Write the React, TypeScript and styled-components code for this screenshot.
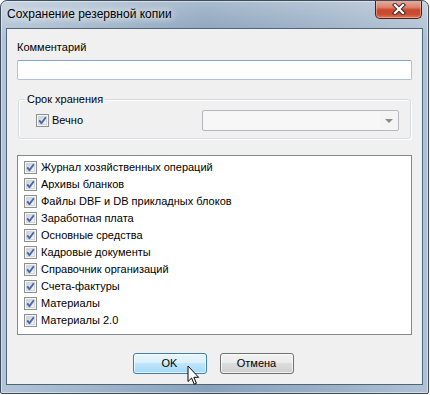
import React from "react";
import styled, { createGlobalStyle } from "styled-components";

const Global = createGlobalStyle`
  html, body { margin: 0; padding: 0; background: #ffffff; }
  body { font-family: "Segoe UI", "Liberation Sans", Arial, sans-serif; font-size: 11px; color: #000; }
`;

const Window = styled.div`
  position: relative;
  width: 429px;
  height: 394px;
  box-sizing: border-box;
  border: 1px solid #3e4c5c;
  border-radius: 7px 7px 2px 2px;
  box-shadow: inset 0 0 0 1px rgba(255, 255, 255, 0.45);
  background:
    linear-gradient(to bottom, rgba(255, 255, 255, 0.28), rgba(255, 255, 255, 0) 36px),
    linear-gradient(to right, #b2c4d6 0%, #a0b5ca 22%, #88a1bb 48%, #9cb1c6 78%, #b0c2d3 100%);
  display: flex;
  flex-direction: column;
  overflow: hidden;
`;

const TitleBar = styled.div`
  height: 27px;
  display: flex;
  align-items: flex-start;
  justify-content: space-between;
  padding-left: 6px;
`;

const Title = styled.div`
  margin-top: 6px;
  font-size: 12px;
  line-height: 15px;
  color: #000;
  text-shadow: 0 0 6px rgba(255, 255, 255, 0.95), 0 0 10px rgba(255, 255, 255, 0.8);
`;

const CloseButton = styled.div`
  width: 47px;
  height: 19px;
  margin-top: -1px;
  margin-right: 6px;
  box-sizing: border-box;
  border: 1px solid #4a2018;
  border-top: none;
  border-radius: 0 0 5px 5px;
  background: linear-gradient(
    to bottom,
    #eab0a3 0%,
    #dc836f 40%,
    #c9482f 55%,
    #cc4c31 80%,
    #dc7a60 100%
  );
  box-shadow: inset 0 0 0 1px rgba(255, 200, 190, 0.5);
  display: flex;
  align-items: center;
  justify-content: center;
`;

const Client = styled.div`
  flex: 1;
  margin: 0 5px 8px 5px;
  border: 1px solid #50657a;
  background: #f0f0f0;
  display: flex;
  flex-direction: column;
  padding: 0 10px;
`;

const Label = styled.div`
  margin-top: 11px;
  line-height: 15px;
`;

const TextInput = styled.div`
  margin-top: 5px;
  height: 20px;
  box-sizing: border-box;
  border: 1px solid #a9c3df;
  border-top-color: #7fa3c9;
  border-radius: 2px;
  background: #fff;
`;

const Group = styled.fieldset`
  margin: 12px 1px 0 1px;
  padding: 0;
  border: 1px solid #d5dde3;
  border-radius: 3px;
  box-shadow: inset 1px 1px 0 #fff, 1px 1px 0 #fff;
  min-width: 0;
`;

const Legend = styled.legend`
  margin-left: 6px;
  padding: 0 2px;
  line-height: 15px;
`;

const GroupRow = styled.div`
  display: flex;
  align-items: center;
  justify-content: space-between;
  padding: 3px 11px 7px 17px;
`;

const CheckRow = styled.div<{ $gap: number }>`
  display: flex;
  align-items: center;
  gap: ${(p) => p.$gap}px;
  line-height: 17px;
  height: 17px;
  white-space: nowrap;
`;

const Combo = styled.div`
  width: 197px;
  height: 21px;
  box-sizing: border-box;
  border: 1px solid #b5b9bd;
  border-radius: 2px;
  background: #f4f4f4;
  display: flex;
  align-items: stretch;
  padding: 1px;
`;

const ComboField = styled.div`
  flex: 1;
  background: #f7f7f7;
`;

const ComboArrow = styled.div`
  width: 17px;
  display: flex;
  align-items: center;
  justify-content: center;
`;

const List = styled.div`
  margin-top: 16px;
  height: 180px;
  box-sizing: border-box;
  border: 1px solid #828790;
  background: #fff;
  padding: 3px 6px;
  display: flex;
  flex-direction: column;
`;

const ButtonRow = styled.div`
  display: flex;
  justify-content: center;
  gap: 13px;
  margin-top: 18px;
  padding-right: 3px;
`;

const Button = styled.div<{ $hover?: boolean }>`
  width: 74px;
  height: 21px;
  box-sizing: border-box;
  border: 1px solid ${(p) => (p.$hover ? "#3c7fb1" : "#707070")};
  border-radius: 3px;
  background: ${(p) =>
    p.$hover
      ? "linear-gradient(to bottom, #eaf6fd 0%, #d9f0fc 50%, #bee6fd 50%, #a7d9f5 100%)"
      : "linear-gradient(to bottom, #f2f2f2 0%, #ebebeb 50%, #dddddd 50%, #cfcfcf 100%)"};
  box-shadow: inset 0 0 0 1px rgba(255, 255, 255, 0.7);
  display: flex;
  align-items: center;
  justify-content: center;
  line-height: 15px;
`;

const Cursor = styled.svg`
  position: absolute;
  left: 186px;
  top: 364px;
`;

const CheckBox: React.FC = () => (
  <svg width="13" height="13" viewBox="0 0 13 13" style={{ flex: "none" }}>
    <defs>
      <linearGradient id="cbInner" x1="0" y1="0" x2="1" y2="1">
        <stop offset="0" stopColor="#c9ced6" />
        <stop offset="1" stopColor="#f7f7f7" />
      </linearGradient>
    </defs>
    <rect x="0.5" y="0.5" width="12" height="12" fill="#f5f5f5" stroke="#8e8f8f" />
    <rect x="2.5" y="2.5" width="8" height="8" fill="url(#cbInner)" stroke="#d3d6da" />
    <path d="M3.2 6.4 L5.4 9.2 L9.8 3.2" fill="none" stroke="#4766ad" strokeWidth="1.9" strokeLinejoin="round" />
  </svg>
);

const items = [
  "Журнал хозяйственных операций",
  "Архивы бланков",
  "Файлы DBF и DB прикладных блоков",
  "Заработная плата",
  "Основные средства",
  "Кадровые документы",
  "Справочник организаций",
  "Счета-фактуры",
  "Материалы",
  "Материалы 2.0",
];

export default function App() {
  return (
    <>
      <Global />
      <Window>
        <TitleBar>
          <Title>Сохранение резервной копии</Title>
          <CloseButton>
            <svg width="14" height="12" viewBox="0 0 14 12">
              <path d="M3 2 L11 10 M11 2 L3 10" stroke="#3b2a28" strokeWidth="4.2" strokeLinecap="square" />
              <path d="M3 2 L11 10 M11 2 L3 10" stroke="#ffffff" strokeWidth="2.2" strokeLinecap="square" />
            </svg>
          </CloseButton>
        </TitleBar>
        <Client>
          <Label>Комментарий</Label>
          <TextInput />
          <Group>
            <Legend>Срок хранения</Legend>
            <GroupRow>
              <CheckRow $gap={3}>
                <CheckBox />
                <span>Вечно</span>
              </CheckRow>
              <Combo>
                <ComboField />
                <ComboArrow>
                  <svg width="8" height="4" viewBox="0 0 8 4">
                    <path d="M0 0 H8 L4 4 Z" fill="#8a8a8a" />
                  </svg>
                </ComboArrow>
              </Combo>
            </GroupRow>
          </Group>
          <List>
            {items.map((t) => (
              <CheckRow key={t} $gap={4}>
                <CheckBox />
                <span>{t}</span>
              </CheckRow>
            ))}
          </List>
          <ButtonRow>
            <Button $hover>OK</Button>
            <Button>Отмена</Button>
          </ButtonRow>
        </Client>
        <Cursor width="13" height="21" viewBox="0 0 13 21">
          <path
            d="M1 1 L1 16.5 L4.6 13 L7.2 19.2 L9.4 18.3 L6.9 12.3 L11.6 12.3 Z"
            fill="#ffffff"
            stroke="#000000"
            strokeWidth="1"
            strokeLinejoin="miter"
          />
        </Cursor>
      </Window>
    </>
  );
}
